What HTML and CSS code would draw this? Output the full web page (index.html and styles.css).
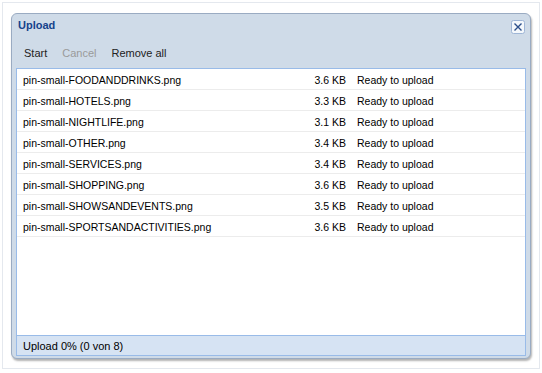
FILE: index.html
```html
<!DOCTYPE html>
<html lang="de">
<head>
<meta charset="UTF-8" />
<meta name="viewport" content="width=device-width, initial-scale=1" />
<title>Upload</title>
<link rel="stylesheet" href="styles.css">
</head>
<body>

<div class="pagina">
  <div class="janela">
    <div class="cabecalho">
      <span class="titulo">Upload</span>
      <button class="fechar" title="Schließen">
        <svg width="14" height="14" viewBox="0 0 14 14">
          <rect x="0.5" y="0.5" width="13" height="13" rx="2" fill="#f4f8fc" stroke="#9fb6d6" />
          <path d="M3.5 3.5 L10.5 10.5 M10.5 3.5 L3.5 10.5" stroke="#2c4f8a" stroke-width="1.4" />
        </svg>
      </button>
    </div>

    <div class="barra">
      <span class="acao">Start</span>
      <span class="acao desativada">Cancel</span>
      <span class="acao">Remove all</span>
    </div>

    <div class="lista">
      <div class="linhas">
        <div class="linha"><span class="nome">pin-small-FOODANDDRINKS.png</span><span class="tamanho">3.6 KB</span><span class="estado">Ready to upload</span></div>
        <div class="linha"><span class="nome">pin-small-HOTELS.png</span><span class="tamanho">3.3 KB</span><span class="estado">Ready to upload</span></div>
        <div class="linha"><span class="nome">pin-small-NIGHTLIFE.png</span><span class="tamanho">3.1 KB</span><span class="estado">Ready to upload</span></div>
        <div class="linha"><span class="nome">pin-small-OTHER.png</span><span class="tamanho">3.4 KB</span><span class="estado">Ready to upload</span></div>
        <div class="linha"><span class="nome">pin-small-SERVICES.png</span><span class="tamanho">3.4 KB</span><span class="estado">Ready to upload</span></div>
        <div class="linha"><span class="nome">pin-small-SHOPPING.png</span><span class="tamanho">3.6 KB</span><span class="estado">Ready to upload</span></div>
        <div class="linha"><span class="nome">pin-small-SHOWSANDEVENTS.png</span><span class="tamanho">3.5 KB</span><span class="estado">Ready to upload</span></div>
        <div class="linha"><span class="nome">pin-small-SPORTSANDACTIVITIES.png</span><span class="tamanho">3.6 KB</span><span class="estado">Ready to upload</span></div>
      </div>
      <div class="rodape">Upload 0% (0 von 8)</div>
    </div>
  </div>
</div>

</body>
</html>
```

FILE: styles.css
```css
body {
  margin: 0;
  background: #ffffff;
  font-family: "Liberation Sans", Arial, sans-serif;
  font-size: 10.5px;
  color: #000;
}
.pagina {
  box-sizing: border-box;
  width: 538px;
  height: 367px;
  margin: 2px 0 0 2px;
  border: 1px solid #e4e8ee;
  padding: 10px 0 0 8px;
}
.janela {
  box-sizing: border-box;
  width: 520px;
  height: 346px;
  border: 1px solid #9aabc2;
  border-radius: 6px;
  background: #cfdbe8;
  padding: 0 4px 2px;
  display: flex;
  flex-direction: column;
  box-shadow: 1px 2px 2px rgba(0, 0, 0, 0.3);
}
.cabecalho {
  height: 22px;
  display: flex;
  align-items: center;
  justify-content: space-between;
  padding: 0 1px 0 2px;
}
.titulo {
  font-size: 11px;
  font-weight: bold;
  color: #15428b;
}
.fechar {
  border: none;
  background: none;
  padding: 0;
  width: 14px;
  height: 14px;
  margin-top: 3px;
  cursor: pointer;
}
.fechar svg {
  display: block;
}
.barra {
  box-sizing: border-box;
  height: 32px;
  padding-top: 2px;
  display: flex;
  align-items: center;
  gap: 15px;
  padding-left: 8px;
  font-size: 11px;
  color: #222;
}
.desativada {
  color: #9a9a9a;
}
.lista {
  flex: 1;
  background: #fff;
  border: 1px solid #99bbe8;
  display: flex;
  flex-direction: column;
}
.linhas {
  flex: 1;
}
.linha {
  box-sizing: border-box;
  height: 21px;
  padding-top: 1px;
  border-bottom: 1px solid #ececec;
  display: flex;
  align-items: center;
}
.nome {
  width: 270px;
  padding-left: 6px;
}
.tamanho {
  width: 53px;
  text-align: right;
}
.estado {
  padding-left: 11px;
}
.rodape {
  height: 20px;
  box-sizing: border-box;
  border-top: 1px solid #99bbe8;
  background: #d6e3f3;
  display: flex;
  align-items: center;
  padding-left: 6px;
  font-size: 11px;
}
```
